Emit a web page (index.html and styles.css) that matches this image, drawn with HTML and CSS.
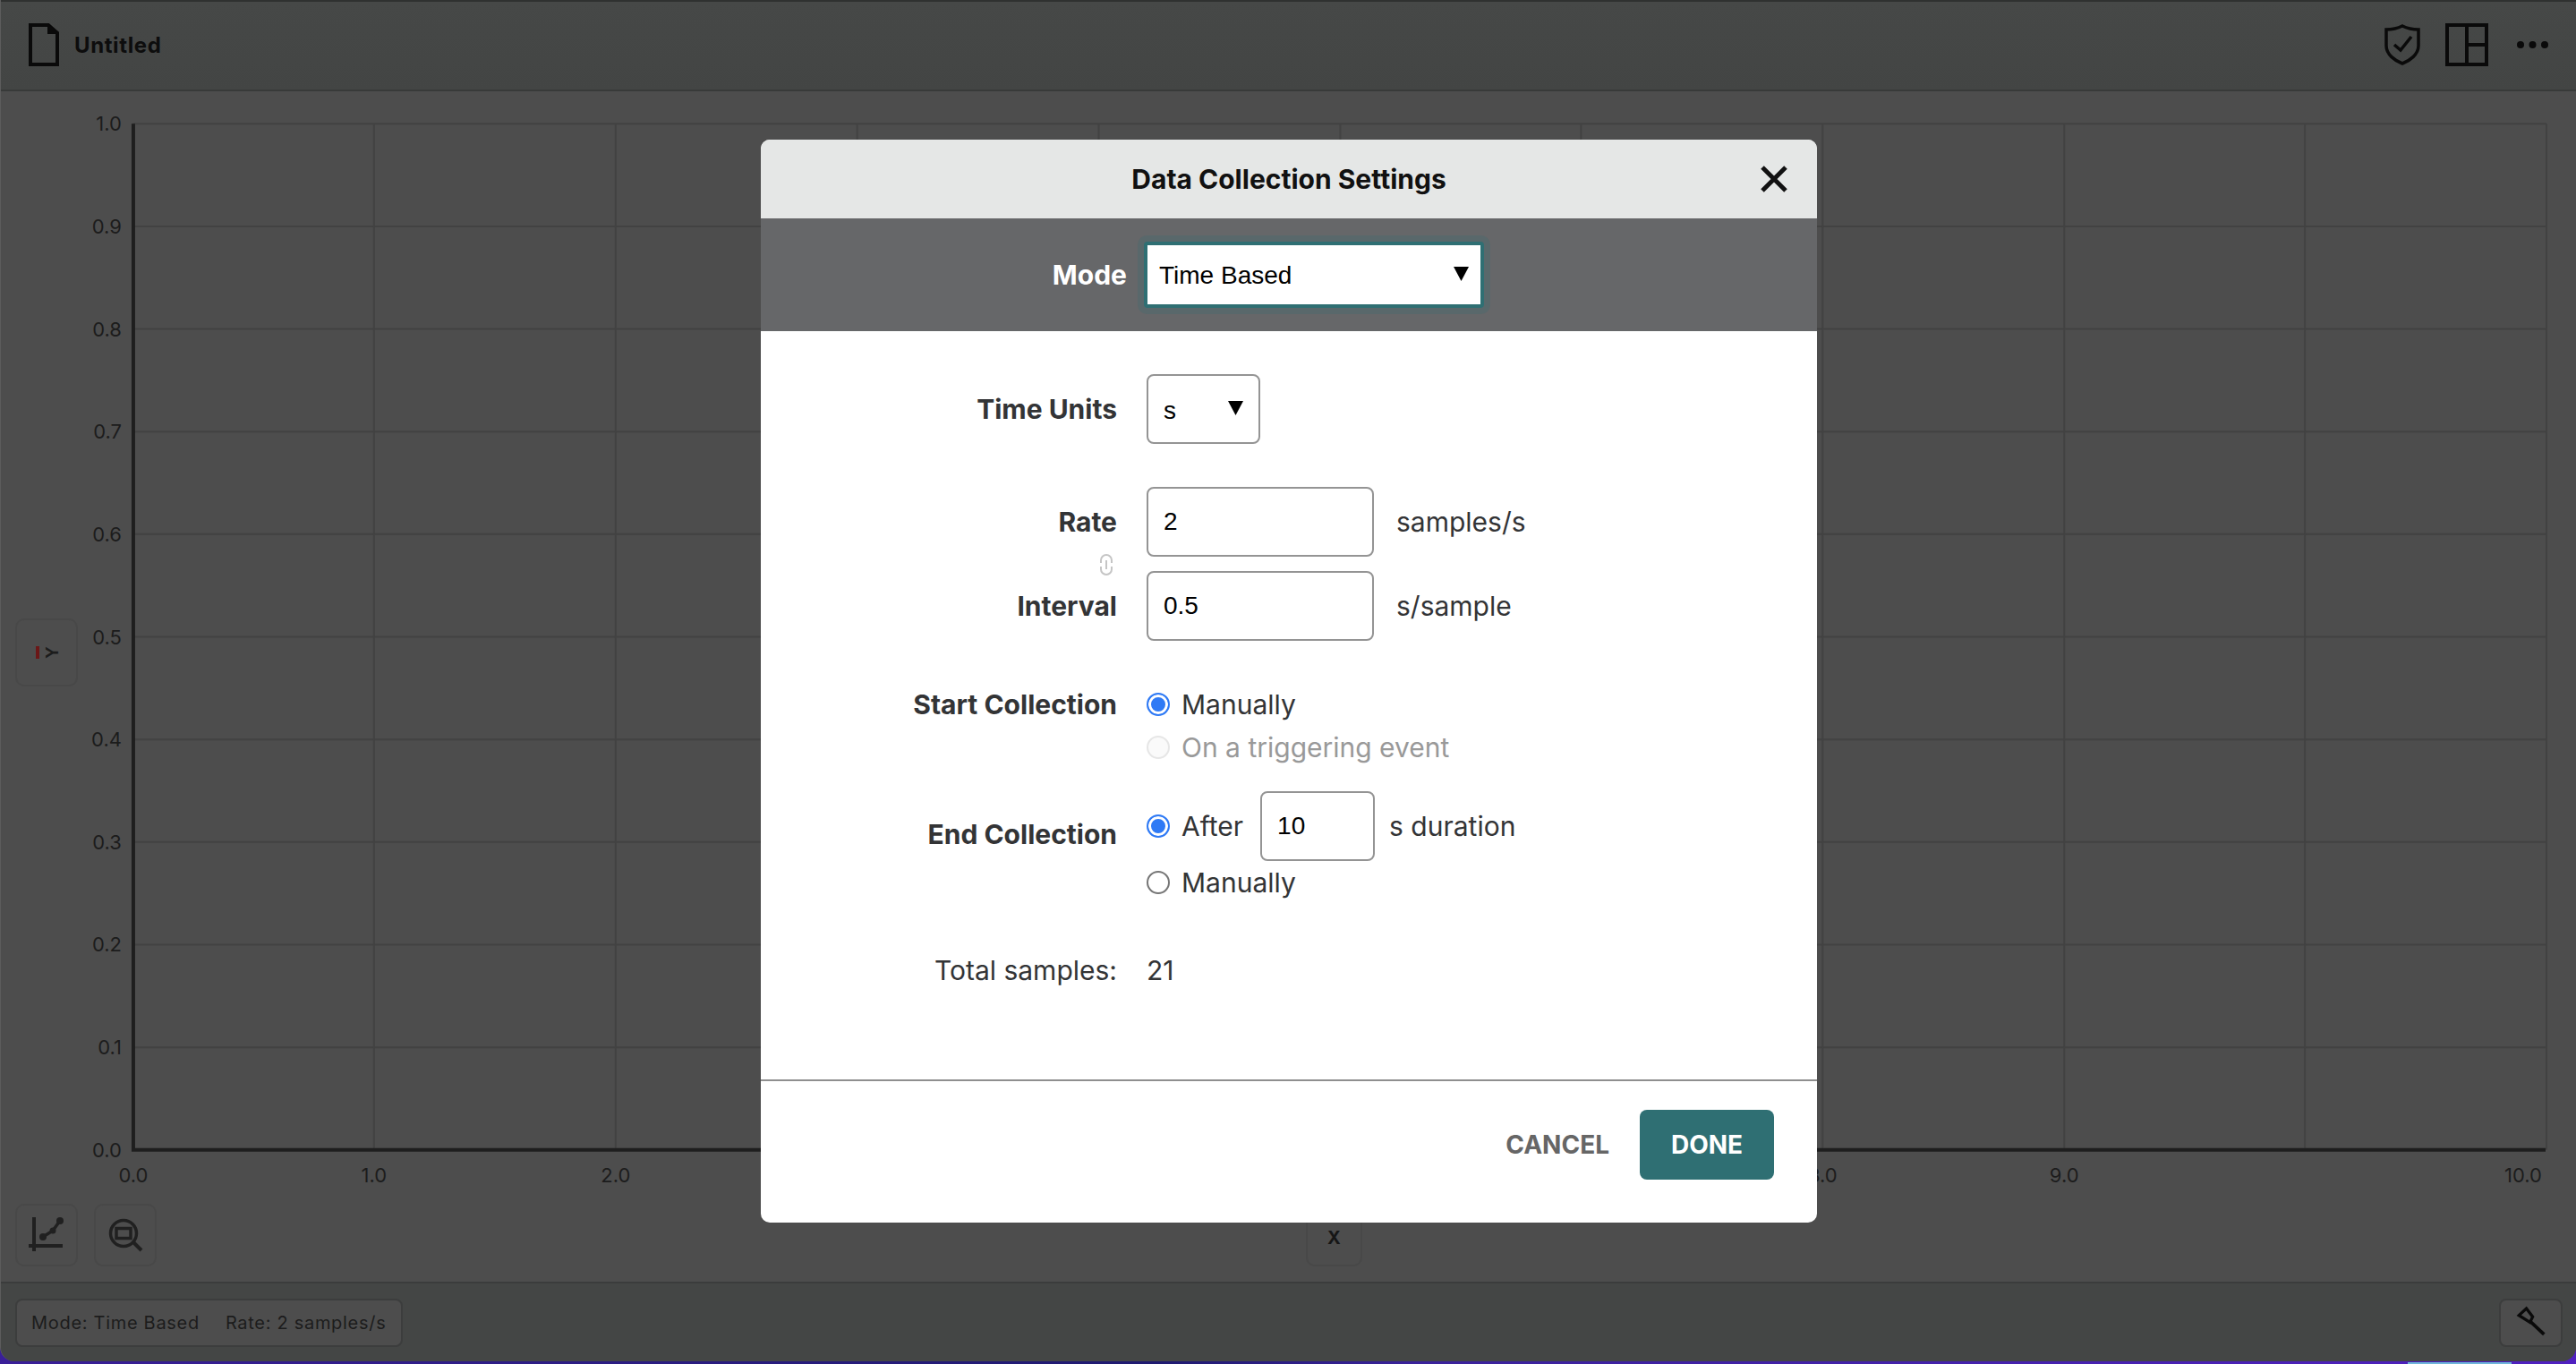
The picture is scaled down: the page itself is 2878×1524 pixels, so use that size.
FILE: index.html
```html
<!DOCTYPE html>
<html lang="en">
<head>
<meta charset="utf-8">
<title>Data Collection Settings</title>
<link rel="stylesheet" href="styles.css">
</head>
<body>
<div class="window">
  <header class="toolbar">
    <svg class="icon-file" viewBox="0 0 34 48"><path class="ink-line" d="M2 2H22L32 11V46H2Z"/><path class="ink-fill" d="M21 0L34 10V12H21Z"/></svg>
    <span class="doc-title">Untitled</span>
    <span class="toolbar-space"></span>
    <svg class="icon-shield" viewBox="0 0 40 46"><path class="ink-line thin" d="M20 2C26 5 32 6 38 6V24C38 34 28 41 20 44C12 41 2 34 2 24V6C8 6 14 5 20 2Z"/><path class="ink-line thin" d="M11 23L18 29L30 14"/></svg>
    <svg class="icon-layout" viewBox="0 0 48 48"><path class="ink-line" d="M2 2H46V46H2ZM24 2V46M24 24H46"/></svg>
    <svg class="icon-dots" viewBox="0 0 35 10"><circle cx="4" cy="5" r="4"/><circle cx="17.5" cy="5" r="4"/><circle cx="31" cy="5" r="4"/></svg>
  </header>

  <main class="graph">
    <svg class="plot" viewBox="0 102 2878 1330">
      <g class="grid">
        <path d="M148 138H2845M148 252.7H2845M148 367.4H2845M148 482.1H2845M148 596.8H2845M148 711.5H2845M148 826.2H2845M148 940.9H2845M148 1055.6H2845M148 1170.3H2845"/>
        <path d="M417 138V1285M687 138V1285M957 138V1285M1227 138V1285M1497 138V1285M1766 138V1285M2036 138V1285M2306 138V1285M2575 138V1285M2845 138V1285"/>
      </g>
      <path class="axis" d="M148 138V1287M146 1285H2844"/>
      <g class="ylabels">
        <text x="135" y="146">1.0</text><text x="135" y="260.7">0.9</text><text x="135" y="375.4">0.8</text><text x="135" y="490.1">0.7</text><text x="135" y="604.8">0.6</text><text x="135" y="719.5">0.5</text><text x="135" y="834.2">0.4</text><text x="135" y="948.9">0.3</text><text x="135" y="1063.6">0.2</text><text x="135" y="1178.3">0.1</text><text x="135" y="1293">0.0</text>
      </g>
      <g class="xlabels">
        <text x="148" y="1321">0.0</text><text x="417" y="1321">1.0</text><text x="687" y="1321">2.0</text><text x="2036" y="1321">8.0</text><text x="2306" y="1321">9.0</text><text x="2798" y="1321">10.0</text><text x="2036" y="1321"></text>
      </g>
      <text class="xlabels-cut" x="2036" y="1321"></text>
    </svg>

    <button class="tool tool-y" type="button"><span class="y-swatch"></span><span class="y-letter">Y</span></button>
    <div class="tool-group">
      <button class="tool" type="button">
        <svg class="tool-icon" viewBox="0 0 70 70"><path class="ink-soft" d="M21 15V53M15 47H53"/><path class="ink-soft thin" d="M31 37L42 30L50 19"/><circle class="dot" cx="31" cy="37" r="4"/><circle class="dot" cx="42" cy="30" r="3.5"/><circle class="dot" cx="50" cy="19" r="4"/></svg>
      </button>
      <button class="tool" type="button">
        <svg class="tool-icon" viewBox="0 0 70 70"><circle class="ink-soft thin" cx="33" cy="33" r="14.5"/><rect class="ink-soft thin" x="25" y="27.5" width="16" height="11"/><path class="ink-soft" d="M44 43L53 52"/></svg>
      </button>
    </div>
    <button class="tool tool-x" type="button">X</button>
  </main>

  <footer class="statusbar">
    <div class="status-pill"><span>Mode: Time Based</span><span>Rate: 2 samples/s</span></div>
    <button class="status-tool" type="button">
      <svg class="tool-icon" viewBox="0 0 70 54"><path class="ink-line thin" d="M20.700 18L29.700 9.700L37.300 19.700L34 26.300Z"/><path class="ink-line" d="M34 25L51 41"/></svg>
    </button>
  </footer>
</div>
<div class="desk-sliver"></div>

<div class="overlay">
  <section class="modal" role="dialog" aria-label="Data Collection Settings">
    <div class="modal-head">
      <h1 class="modal-title">Data Collection Settings</h1>
      <svg class="modal-close" viewBox="0 0 30 30"><path d="M2 2L28 28M28 2L2 28"/></svg>
    </div>
    <div class="mode-bar">
      <label class="mode-label" for="mode">Mode</label>
      <div class="select select-mode">
        <select id="mode"><option>Time Based</option></select>
      </div>
    </div>
    <div class="modal-body">
      <div class="row row-units">
        <label class="field-label" for="units">Time Units</label>
        <div class="select select-units"><select id="units"><option>s</option></select></div>
      </div>
      <div class="row row-rate">
        <label class="field-label" for="rate">Rate</label>
        <div class="value-line"><input class="text-input wide" id="rate" type="text" value="2"><span class="unit">samples/s</span></div>
        <svg class="link-icon" viewBox="0 0 16 26"><path d="M2 11V8A6 6 0 0 1 14 8V11M2 15V18A6 6 0 0 0 14 18V15M8 8V18"/></svg>
      </div>
      <div class="row row-interval">
        <label class="field-label" for="interval">Interval</label>
        <div class="value-line"><input class="text-input wide" id="interval" type="text" value="0.5"><span class="unit">s/sample</span></div>
      </div>
      <div class="row row-start">
        <span class="field-label top">Start Collection</span>
        <div class="options">
          <label class="option"><input type="radio" name="start" checked>Manually</label>
          <label class="option disabled"><input type="radio" name="start" disabled>On a triggering event</label>
        </div>
      </div>
      <div class="row row-end">
        <span class="field-label end">End Collection</span>
        <div class="options">
          <div class="option tall"><input type="radio" name="end" checked><span>After</span><input class="text-input narrow" type="text" value="10"><span>s duration</span></div>
          <label class="option last"><input type="radio" name="end">Manually</label>
        </div>
      </div>
      <div class="row row-total">
        <span class="field-label plain">Total samples:</span>
        <span class="total">21</span>
      </div>
    </div>
    <div class="modal-foot">
      <button class="btn-cancel" type="button">CANCEL</button>
      <button class="btn-done" type="button">DONE</button>
    </div>
  </section>
</div>
</body>
</html>
```

FILE: styles.css
```css
* { box-sizing: border-box; }

html, body {
  margin: 0;
  height: 1524px;
  overflow: hidden;
}

body {
  position: relative;
  background: linear-gradient(90deg, #3a1f98 0%, #1f1a70 45%, #3a229a 55%, #5020c0 100%);
  font-family: Inter, "Liberation Sans", sans-serif;
}

.window {
  display: flex;
  flex-direction: column;
  height: 1521px;
  background: #4d4d4d;
  border-left: 1px solid #5c5c5c;
  border-radius: 0 0 16px 16px;
  overflow: hidden;
}

/* toolbar */
.toolbar {
  display: flex;
  align-items: center;
  flex: none;
  height: 102px;
  padding: 0 31px 2px 31px;
  background: linear-gradient(#464847, #434544);
  border-top: 2px solid #2f3130;
  border-bottom: 2px solid #383a39;
}

.toolbar-space { flex: 1; }

.doc-title {
  margin-left: 17px;
  font-size: 24px;
  font-weight: 700;
  letter-spacing: 0.6px;
  color: #0d0d0d;
}

.icon-file { width: 34px; height: 48px; }
.icon-shield { width: 40px; height: 46px; margin-right: 28px; }
.icon-layout { width: 48px; height: 48px; margin-right: 32px; }
.icon-dots { width: 35px; height: 10px; fill: #0a0a0a; }

.ink-line { fill: none; stroke: #0a0a0a; stroke-width: 4; }
.ink-line.thin { stroke-width: 3.5; }
.ink-fill { fill: #0a0a0a; }

/* graph */
.graph {
  position: relative;
  flex: 1;
  min-height: 0;
}

.plot { display: block; width: 2877px; height: 1330px; }

.grid path { fill: none; stroke: #424242; stroke-width: 2; }
.axis { fill: none; stroke: #1e1e1e; stroke-width: 4; }

.ylabels text, .xlabels text {
  font-size: 22px;
  fill: #1c1c1c;
}
.ylabels text { text-anchor: end; }
.xlabels text { text-anchor: middle; }
.xlabels text:nth-child(6) { text-anchor: start; }

.tool {
  display: flex;
  align-items: center;
  justify-content: center;
  width: 70px;
  height: 70px;
  padding: 0;
  background: transparent;
  border: 2px solid #484848;
  border-radius: 10px;
}

.tool-icon { display: block; width: 70px; height: 70px; flex: none; }

.ink-soft { fill: none; stroke: #202020; stroke-width: 4; }
.ink-soft.thin { stroke-width: 3.5; }
.dot { fill: #202020; }

.tool-y {
  position: absolute;
  left: 16px;
  top: 589px;
  height: 76px;
  gap: 7px;
}

.y-swatch { width: 4px; height: 14px; background: #6b1717; }

.y-letter {
  font-size: 20px;
  font-weight: 700;
  line-height: 1;
  color: #1c1c1c;
  transform: rotate(-90deg);
}

.tool-group {
  position: absolute;
  left: 16px;
  bottom: 17px;
  display: flex;
  gap: 18px;
}

.tool-x {
  position: absolute;
  left: 1458px;
  bottom: 17px;
  width: 63px;
  height: 66px;
  padding-top: 2px;
  font-family: Inter, sans-serif;
  font-size: 20px;
  font-weight: 700;
  color: #161616;
}

/* status bar */
.statusbar {
  display: flex;
  justify-content: space-between;
  flex: none;
  height: 89px;
  padding: 17px 15px 0 16px;
  background: #444645;
  border-top: 2px solid #3b3c3c;
}

.status-pill {
  display: flex;
  align-items: center;
  gap: 29px;
  width: 433px;
  height: 54px;
  padding: 0 16px;
  background: #4d4d4d;
  border: 2px solid #3c3d3d;
  border-radius: 8px;
  font-size: 20px;
  letter-spacing: 0.7px;
  color: #1c1c1c;
  white-space: nowrap;
}

.status-tool {
  width: 71px;
  height: 54px;
  padding: 0;
  background: #4d4d4d;
  border: 2px solid #3c3d3d;
  border-radius: 8px;
}

.status-tool .tool-icon { width: 67px; height: 50px; }

.desk-sliver {
  position: absolute;
  left: 2690px;
  bottom: 0;
  width: 116px;
  height: 2px;
  background: #6fb6d9;
}

/* modal */
.overlay {
  position: absolute;
  inset: 0;
  padding: 156px 0 0 850px;
}

.modal {
  display: flex;
  flex-direction: column;
  width: 1180px;
  height: 1210px;
  background: #fff;
  border-radius: 10px;
  overflow: hidden;
}

.modal-head {
  position: relative;
  display: flex;
  align-items: center;
  justify-content: center;
  flex: none;
  height: 88px;
  background: #e5e7e6;
}

.modal-title {
  margin: 0;
  font-size: 30px;
  font-weight: 700;
  color: #111;
}

.modal-close {
  position: absolute;
  right: 33px;
  top: 29px;
  width: 30px;
  height: 30px;
}

.modal-close path { fill: none; stroke: #111; stroke-width: 5; }

.mode-bar {
  display: flex;
  align-items: center;
  flex: none;
  height: 126px;
  background: #666769;
}

.mode-label {
  width: 409px;
  margin-right: 19px;
  text-align: right;
  font-size: 30px;
  font-weight: 700;
  color: #fff;
}

.select { position: relative; }

.select select {
  display: block;
  width: 100%;
  height: 100%;
  padding: 0 0 0 13px;
  appearance: none;
  background: #fff;
  border: 4px solid #2f6f73;
  border-radius: 4px;
  outline: none;
  font-family: "Liberation Sans", sans-serif;
  font-size: 28px;
  color: #000;
}

.select::after {
  content: "";
  position: absolute;
  width: 17px;
  height: 16px;
  background: #000;
  clip-path: polygon(0 0, 100% 0, 50% 100%);
}

.select-mode {
  width: 380px;
  height: 74px;
  border-radius: 4px;
  box-shadow: 0 0 0 7px rgba(47, 111, 115, 0.22);
}

.select-mode::after { right: 17px; top: 28px; }

.select-units { width: 127px; height: 78px; }

.select-units select {
  padding-left: 17px;
  padding-top: 2px;
  border: 2px solid #949494;
  border-radius: 8px;
}

.select-units::after { right: 19px; top: 30px; }

.modal-body { flex: 1; min-height: 0; }

.row {
  position: relative;
  display: grid;
  grid-template-columns: 398px 1fr;
  column-gap: 33px;
  align-items: center;
}

.row-units { margin-top: 48px; }
.row-rate { margin-top: 48px; }
.row-interval { margin-top: 16px; }
.row-start { margin-top: 47px; align-items: start; }
.row-end { margin-top: 25px; align-items: start; }
.row-total { margin-top: 57px; }

.field-label {
  text-align: right;
  font-size: 30px;
  font-weight: 700;
  line-height: 36px;
  color: #333436;
}

.field-label.top { line-height: 48px; }
.field-label.end { padding-top: 30px; }
.field-label.plain { font-weight: 400; }

.value-line { display: flex; align-items: center; }

.unit {
  margin-left: 25px;
  font-size: 30px;
  color: #333436;
}

.text-input {
  height: 78px;
  padding: 0 0 0 17px;
  background: #fff;
  border: 2px solid #949494;
  border-radius: 8px;
  outline: none;
  font-family: "Liberation Sans", sans-serif;
  font-size: 28px;
  color: #000;
}

.text-input.wide { width: 254px; }
.text-input.narrow { width: 128px; margin: 0 16px 0 19px; }

.link-icon {
  position: absolute;
  left: 378px;
  top: 74px;
  width: 16px;
  height: 26px;
}

.link-icon path { fill: none; stroke: #c5c5c5; stroke-width: 2; }

.options { display: flex; flex-direction: column; }

.option {
  display: flex;
  align-items: center;
  height: 48px;
  font-size: 30px;
  color: #333436;
}

.option.tall { height: 78px; }
.option.last { height: 47px; }
.option.disabled { color: #999; }

.option input[type="radio"] {
  flex: none;
  width: 26px;
  height: 26px;
  margin: 0 13px 0 0;
  appearance: none;
  background: #fff;
  border: 2px solid #767676;
  border-radius: 50%;
}

.option input[type="radio"]:checked {
  background: #2f7af5;
  border: 2.5px solid #2f7af5;
  box-shadow: inset 0 0 0 3px #fff;
}

.option input[type="radio"]:disabled {
  background: #fafafa;
  border-color: #e6e6e6;
}

.total {
  font-size: 30px;
  line-height: 36px;
  color: #333436;
}

.modal-foot {
  display: flex;
  align-items: center;
  justify-content: flex-end;
  gap: 34px;
  flex: none;
  height: 160px;
  padding: 32px 48px 48px 0;
  border-top: 2px solid #8f8f8f;
}

.btn-cancel, .btn-done {
  padding: 0;
  border: 0;
  font-family: Inter, sans-serif;
  font-size: 28px;
  font-weight: 700;
}

.btn-cancel { background: transparent; color: #666; }

.btn-done {
  width: 150px;
  height: 78px;
  background: #2f6f73;
  border-radius: 8px;
  color: #fff;
}
```
